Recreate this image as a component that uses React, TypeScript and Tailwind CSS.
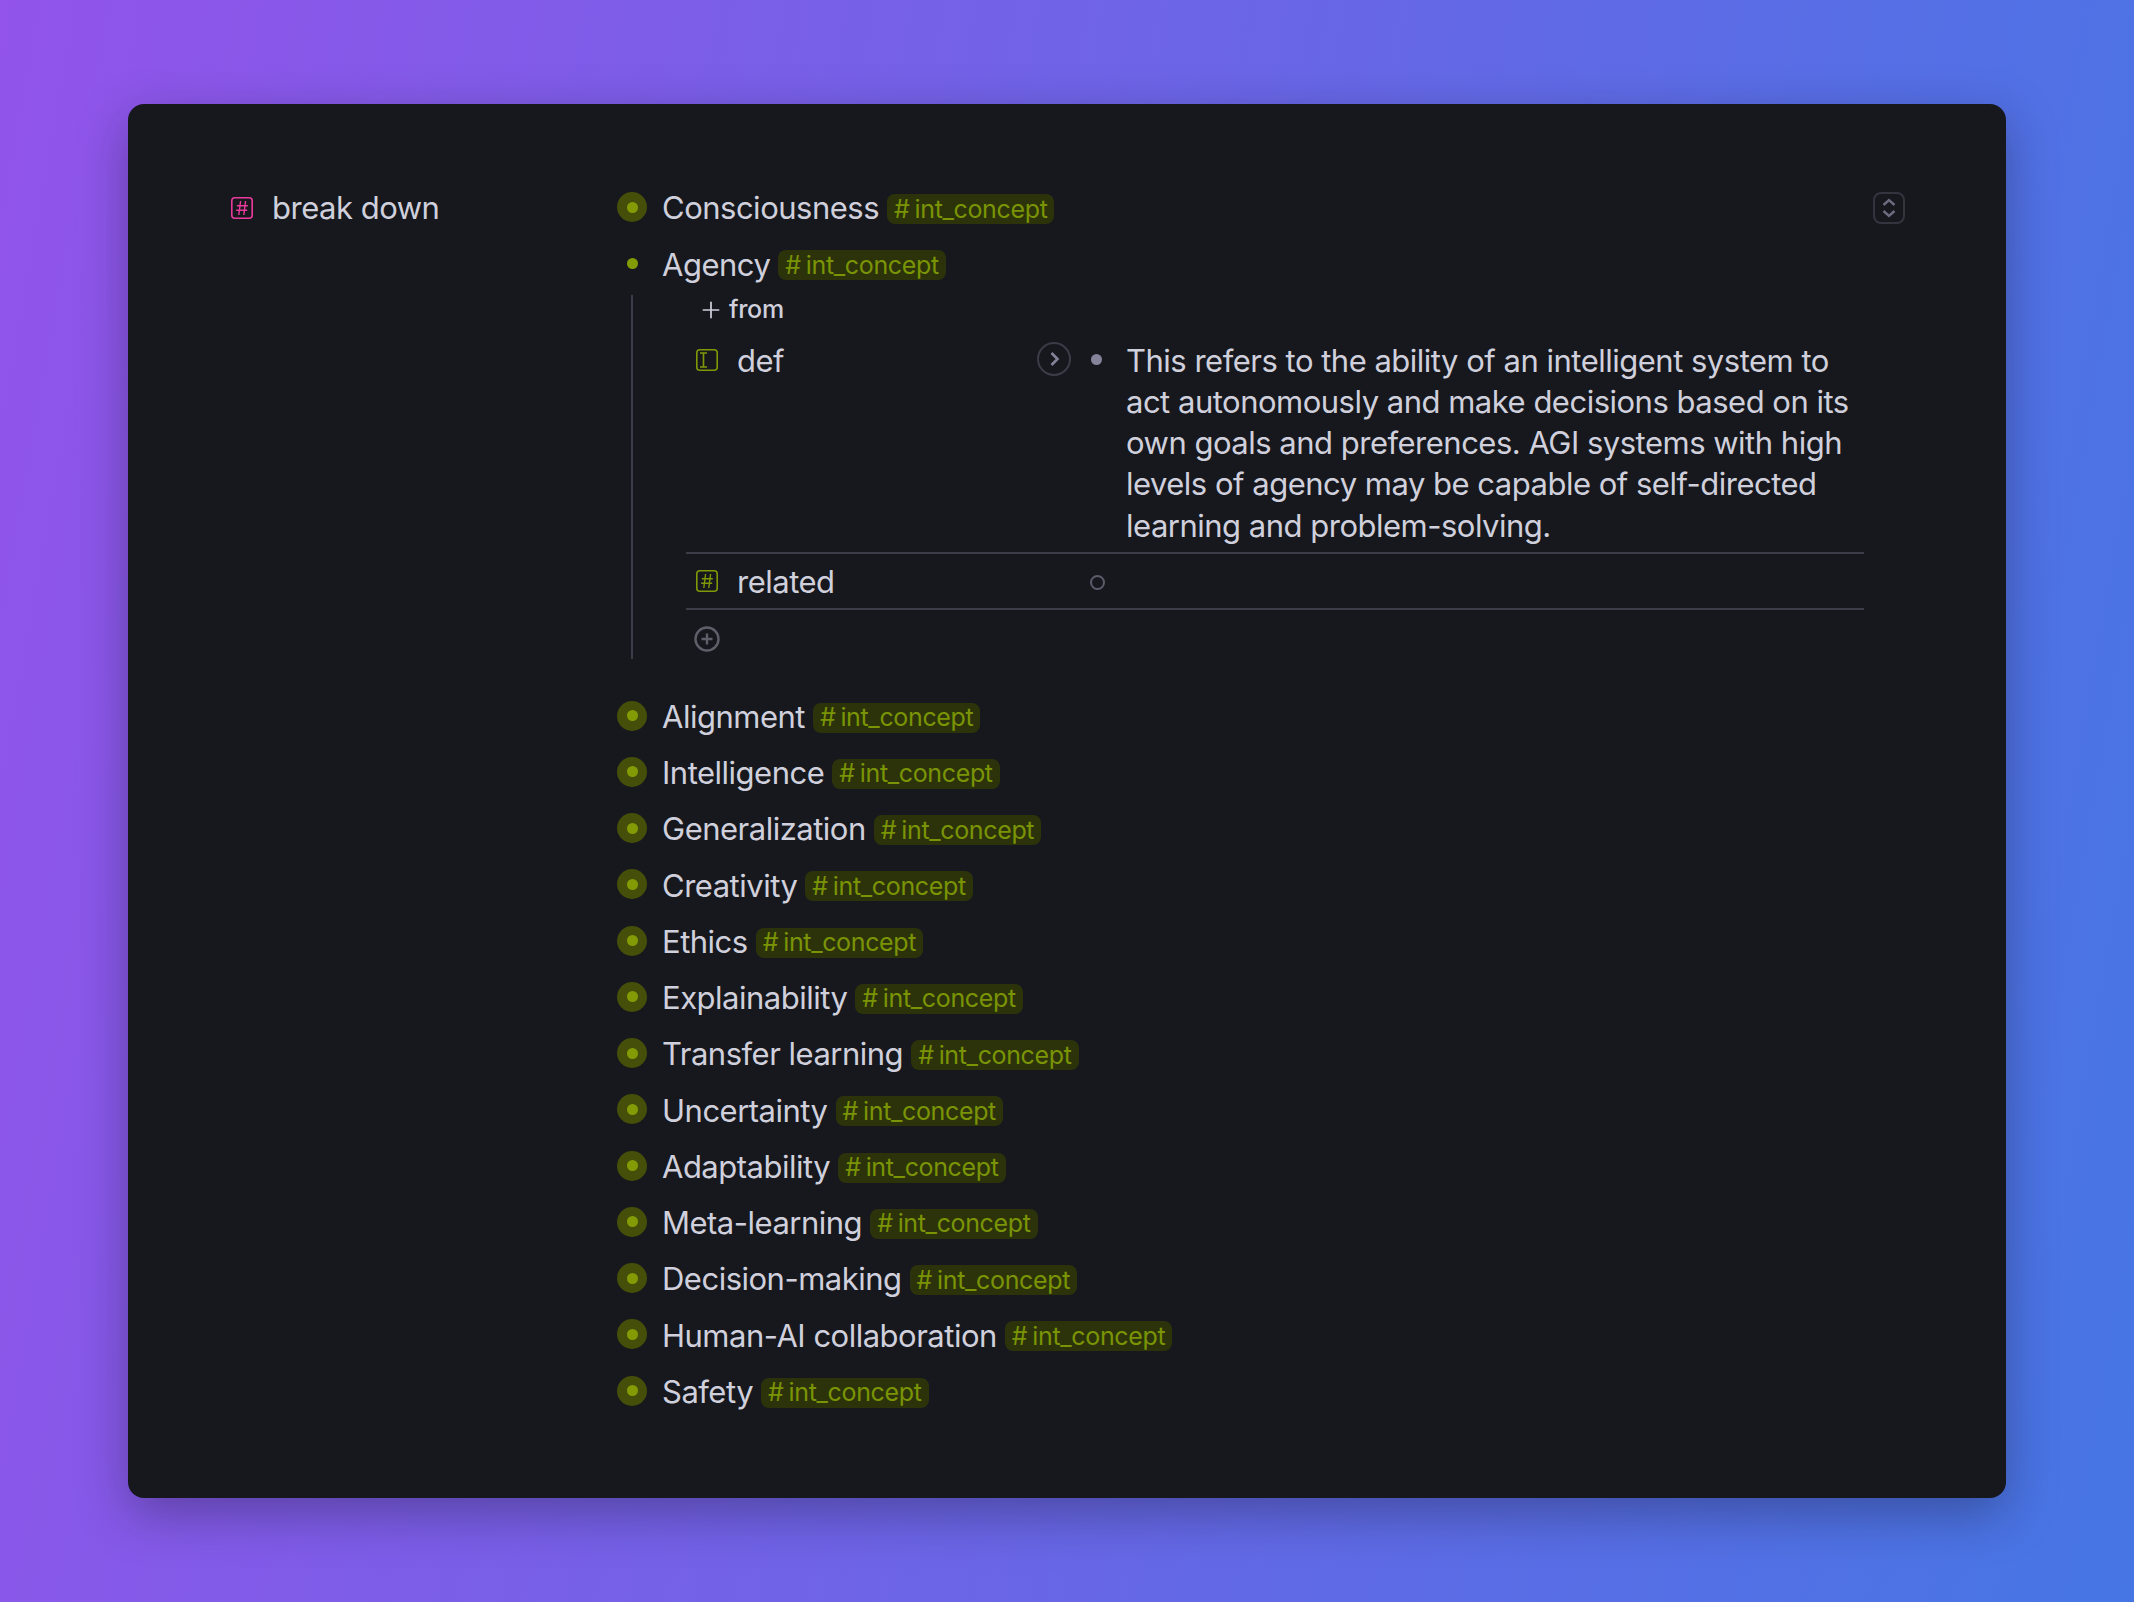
import { Plus } from 'lucide-react';

const items = [
  'Alignment',
  'Intelligence',
  'Generalization',
  'Creativity',
  'Ethics',
  'Explainability',
  'Transfer learning',
  'Uncertainty',
  'Adaptability',
  'Meta-learning',
  'Decision-making',
  'Human-AI collaboration',
  'Safety',
];

function Tag() {
  return (
    <span className="ml-2 mt-[2px] flex h-[30px] items-center gap-[5px] rounded-lg bg-[#2c330b] px-[7px] text-[25px] leading-none tracking-[-0.35px] text-[#7a9405]">
      <span>#</span>
      <span>int_concept</span>
    </span>
  );
}

function Bullet({ ring = true }: { ring?: boolean }) {
  return (
    <div className="mb-[2px] flex w-[30px] shrink-0 justify-center">
      <div className={`flex h-[30px] w-[30px] items-center justify-center rounded-full ${ring ? 'bg-[#454f09]' : ''}`}>
        <div className="h-[11px] w-[11px] rounded-full bg-[#839c05]" />
      </div>
    </div>
  );
}

function Row({ label, ring = true }: { label: string; ring?: boolean }) {
  return (
    <div className="flex h-[56.25px] items-center">
      <Bullet ring={ring} />
      <div className="ml-[15px] flex items-center">
        <span>{label}</span>
        <Tag />
      </div>
    </div>
  );
}

function BoxIcon({ color, children }: { color: string; children: React.ReactNode }) {
  return (
    <svg width="24" height="24" viewBox="0 0 24 24" fill="none" stroke={color} strokeWidth="1.6" className="shrink-0">
      <rect x="1.8" y="1.8" width="20.4" height="20.4" rx="3" />
      {children}
    </svg>
  );
}

const Hash = (
  <path d="M10.6 5 8.8 19M15.6 5 13.8 19M6.8 9.8h11M6.2 14.2h11" strokeWidth="1.4" />
);

export default function App() {
  return (
    <div className="flex min-h-[1602px] items-start justify-center bg-[linear-gradient(100deg,#9254ea_0%,#4676e4_100%)] pt-[104px] font-['Inter',sans-serif] text-[31px] leading-[41.3px] tracking-[-0.5px] text-[#d0d0dc]">
      <div className="flex h-[1394px] w-[1878px] rounded-2xl bg-[#16181e] pl-[102px] pt-[76px] pr-[101px] shadow-[0_16px_50px_rgba(20,20,40,0.35)]">
        <div className="flex h-[56px] w-[387px] shrink-0 items-center">
          <BoxIcon color="#ec3a9c">{Hash}</BoxIcon>
          <span className="ml-[18px]">break down</span>
        </div>

        <div className="relative flex-1">
          <button className="absolute right-0 top-[12px] flex h-[32px] w-[32px] items-center justify-center rounded-lg border-2 border-[#33343e]">
            <svg width="16" height="22" viewBox="0 0 16 22" fill="none" stroke="#6d6b80" strokeWidth="2.4">
              <path d="M2.5 8 8 3l5.5 5M2.5 14 8 19l5.5-5" />
            </svg>
          </button>

          <Row label="Consciousness" />
          <Row label="Agency" ring={false} />

          <div className="relative ml-[69px] mr-[41px] h-[374px]">
            <div className="absolute -left-[55px] top-[2px] h-[364px] w-[2px] bg-[#3b3c47]" />

            <div className="flex h-[35px] items-center pl-[12px] text-[25px] font-medium tracking-[-0.3px]">
              <Plus size={26} strokeWidth={1.6} />
              <span className="ml-[5px]">from</span>
            </div>

            <div className="flex border-b-2 border-[#3b3c47] pb-[6px] pt-[12px]">
              <div className="flex w-[385px] shrink-0 items-start">
                <div className="ml-[9px] mt-[8px]">
                  <BoxIcon color="#7d9a05">
                    <path d="M5 5h7M5 19h7M8.5 5v14" strokeWidth="1.6" />
                  </BoxIcon>
                </div>
                <span className="ml-[18px]">def</span>
                <div className="ml-auto mt-[2px] flex h-[34px] w-[34px] items-center justify-center rounded-full border-2 border-[#3b3c47]">
                  <svg width="14" height="16" viewBox="0 0 14 16" fill="none" stroke="#85839a" strokeWidth="2.6">
                    <path d="m4.5 2 6 6-6 6" />
                  </svg>
                </div>
              </div>
              <div className="ml-[20px] mt-[14px] h-[11px] w-[11px] shrink-0 rounded-full bg-[#85839a]" />
              <p className="ml-[24px] flex-1">
                This refers to the ability of an intelligent system to act autonomously and make decisions based on its own goals and preferences. AGI systems with high levels of agency may be capable of self-directed learning and problem-solving.
              </p>
            </div>

            <div className="flex h-[56px] items-center border-b-2 border-[#3b3c47]">
              <div className="flex w-[385px] shrink-0 items-center">
                <div className="ml-[9px]">
                  <BoxIcon color="#7d9a05">{Hash}</BoxIcon>
                </div>
                <span className="ml-[18px] mt-[1px]">related</span>
              </div>
              <div className="ml-[19px] mt-[3px] h-[15px] w-[15px] rounded-full border-2 border-[#5c5b6a]" />
            </div>

            <div className="flex h-[58px] items-center pl-[8px]">
              <svg width="26" height="26" viewBox="0 0 26 26" fill="none" stroke="#5f5f69" strokeWidth="2.4">
                <circle cx="13" cy="13" r="11.5" />
                <path d="M13 7.5v11M7.5 13h11" />
              </svg>
            </div>
          </div>

          <div className="mt-[22px]">
            {items.map((item) => (
              <Row key={item} label={item} />
            ))}
          </div>
        </div>
      </div>
    </div>
  );
}
